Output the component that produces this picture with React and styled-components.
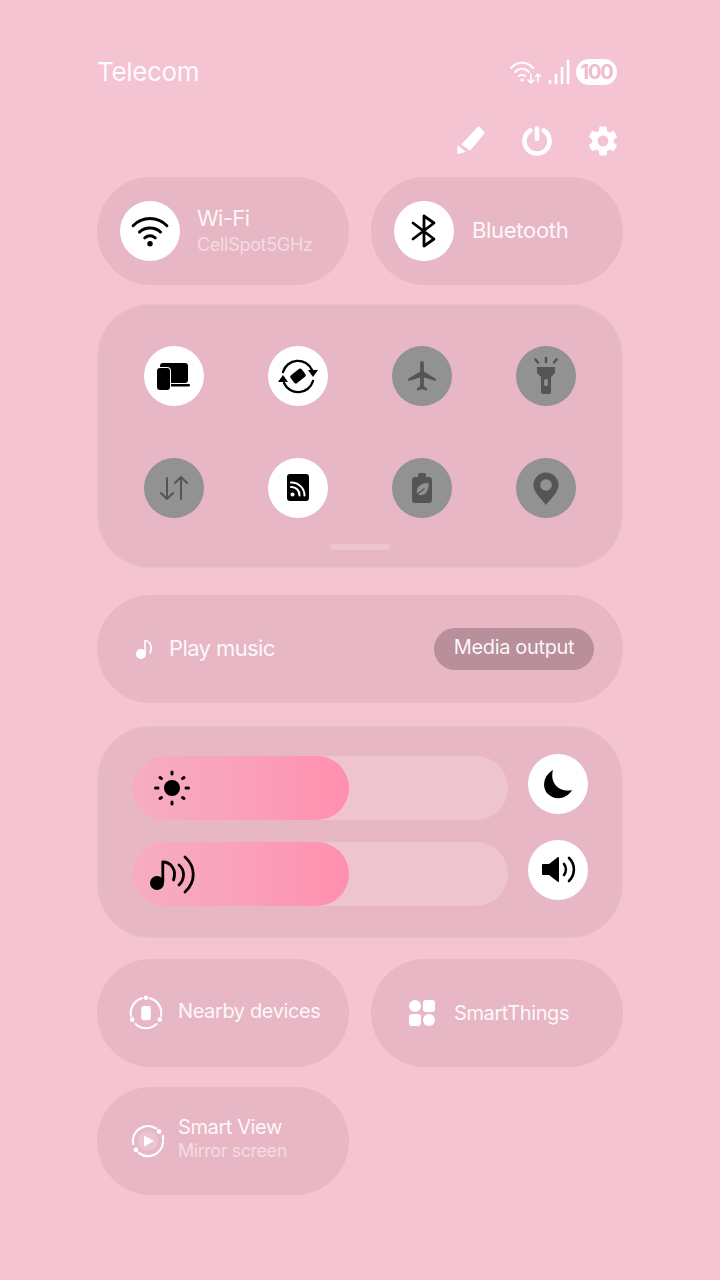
import React from 'react';
import styled, { createGlobalStyle } from 'styled-components';

const GlobalStyle = createGlobalStyle`
  html, body {
    margin: 0;
    padding: 0;
    background: #f5c4d3;
  }
  * {
    box-sizing: border-box;
  }
`;

const Page = styled.div`
  width: 720px;
  height: 1280px;
  padding: 54px 97px 0;
  background: #f5c4d3;
  color: #fff;
  font-family: Inter, "Noto Sans", sans-serif;
  overflow: hidden;
`;

const StatusBar = styled.div`
  display: flex;
  justify-content: space-between;
  align-items: center;
  height: 34px;
  padding-right: 6px;
`;

const Carrier = styled.div`
  font-size: 26px;
  letter-spacing: -0.35px;
  color: rgba(255, 255, 255, 0.95);
`;

const StatusIcons = styled.div`
  display: flex;
  align-items: center;
  gap: 5px;
  margin-top: 2px;
`;

const Battery = styled.div`
  width: 41px;
  height: 26px;
  border-radius: 13px;
  background: #fff;
  color: #f0bccb;
  font-size: 20px;
  font-weight: 700;
  letter-spacing: -1.2px;
  line-height: 26px;
  text-align: center;
`;

const Actions = styled.div`
  display: flex;
  justify-content: flex-end;
  gap: 36px;
  height: 34px;
  margin-top: 36px;
  padding-right: 5px;
  align-items: center;
`;

const TileRow = styled.div`
  display: grid;
  grid-template-columns: 252px 252px;
  column-gap: 22px;
  margin-top: ${({ $top }) => $top}px;
`;

const Tile = styled.div`
  display: flex;
  align-items: center;
  gap: ${({ $gap }) => $gap || 17}px;
  height: 108px;
  padding-left: ${({ $pad }) => $pad || 23}px;
  border-radius: 54px;
  background: #e8b7c5;
`;

const Circle = styled.div`
  display: flex;
  align-items: center;
  justify-content: center;
  flex: none;
  width: 60px;
  height: 60px;
  border-radius: 50%;
  background: ${({ $off }) => ($off ? '#929292' : '#fff')};
  color: ${({ $off }) => ($off ? '#555' : '#000')};
`;

const TileText = styled.div`
  display: flex;
  flex-direction: column;
  gap: ${({ $gap }) => $gap || 0}px;
  margin-top: ${({ $shift }) => $shift || 0}px;
`;

const TileTitle = styled.div`
  font-size: ${({ $size }) => $size || 22}px;
  line-height: 25px;
  letter-spacing: ${({ $spacing }) => $spacing || -0.3}px;
  color: rgba(255, 255, 255, 0.92);
`;

const TileSub = styled.div`
  font-size: 18px;
  line-height: 21px;
  letter-spacing: ${({ $spacing }) => $spacing || -0.3}px;
  color: rgba(255, 255, 255, 0.5);
`;

const QuickPanel = styled.div`
  width: 524px;
  height: 262px;
  margin: 20px 0 0 1px;
  padding: 41px 46px 0;
  border-radius: 52px;
  background: #e8b7c5;
  box-shadow: 0 0 0 1px #ecbdca;
`;

const QuickGrid = styled.div`
  display: grid;
  grid-template-columns: repeat(4, 60px);
  column-gap: 64px;
  row-gap: 52px;
`;

const PageHandle = styled.div`
  width: 60px;
  height: 6px;
  margin: 26px auto 0;
  border-radius: 3px;
  background: #eec4d0;
`;

const MusicTile = styled.div`
  display: flex;
  align-items: center;
  justify-content: space-between;
  height: 108px;
  margin-top: 28px;
  padding: 0 29px 0 38px;
  border-radius: 54px;
  background: #e8b7c5;
`;

const MusicLabel = styled.div`
  display: flex;
  align-items: center;
  gap: 16px;
`;

const MediaButton = styled.div`
  height: 42px;
  width: 160px;
  border-radius: 21px;
  background: #b98f9b;
  color: rgba(255, 255, 255, 0.95);
  font-size: 20px;
  line-height: 39px;
  letter-spacing: -0.35px;
  text-align: center;
`;

const SliderPanel = styled.div`
  display: flex;
  flex-direction: column;
  gap: 22px;
  width: 524px;
  height: 210px;
  margin: 24px 0 0 1px;
  padding: 29px 0 0 34px;
  border-radius: 52px;
  background: #e8b7c5;
  box-shadow: 0 0 0 1px #ecbdca;
`;

const SliderRow = styled.div`
  display: flex;
  align-items: flex-start;
  gap: 20px;
  height: 64px;
`;

const Track = styled.div`
  width: 376px;
  height: 64px;
  border-radius: 32px;
  background: #edc4d0;
`;

const Fill = styled.div`
  display: flex;
  align-items: center;
  height: 100%;
  padding-left: 18px;
  border-radius: 32px;
  background: linear-gradient(90deg, #f5adc2 0%, #fb9fba 55%, #ff8fae 100%);
  color: #000;
`;

const SliderButton = styled(Circle)`
  margin-top: -2px;
`;

const SvgIcon = styled.svg`
  display: block;
  flex: none;
`;

const Glyph = ({ children, size = 40, view = '-20 -20 40 40', height }) => (
  <SvgIcon width={size} height={height || size} viewBox={view} fill="currentColor">
    {children}
  </SvgIcon>
);

const line = { fill: 'none', stroke: 'currentColor', strokeLinecap: 'round', strokeLinejoin: 'round' };

const WifiIcon = () => (
  <Glyph view="0 0 36 32" size={38} height={34}>
    <g {...line} strokeWidth="2.8">
      <path d="M2 11C11 2 25 2 34 11" />
      <path d="M8 17C13.5 12 22.5 12 28 17" />
      <path d="M13 22.5C16 20.2 20 20.2 23 22.5" />
    </g>
    <circle cx="18" cy="28" r="2.6" />
  </Glyph>
);

const BluetoothIcon = () => (
  <Glyph view="-20 -20 40 40">
    <path {...line} strokeWidth="2.8" d="M-11 -8L10 8L0 15V-15L10 -8L-11 8" />
  </Glyph>
);

const DevicesIcon = () => (
  <Glyph>
    <rect x="-14" y="-13" width="28" height="20" rx="3" />
    <rect x="-4" y="8" width="20" height="2.4" rx="1" />
    <rect x="-18" y="-9" width="15" height="24" rx="4" fill="#fff" />
    <rect x="-17" y="-8" width="13" height="22" rx="3" />
  </Glyph>
);

const RotateIcon = () => (
  <Glyph>
    <g {...line} strokeWidth="2.4">
      <path d="M-15 -4A15.5 15.5 0 0 1 14 -6" />
      <path d="M15 5A15.5 15.5 0 0 1 -14 7" />
    </g>
    <polygon points="10,-6 20,-6 15,1" />
    <polygon points="-20,6 -10,6 -15,-1" />
    <rect x="-7" y="-5" width="14" height="10" rx="2" transform="rotate(-38)" />
  </Glyph>
);

const PlaneIcon = () => (
  <Glyph>
    <path
      transform="translate(-17.4 -17.4) scale(1.45)"
      d="M21.5 15.5v-1.6l-8.2-5V3.5c0-.9-.6-1.8-1.3-1.8s-1.3.9-1.3 1.8v5.4l-8.2 5v1.6l8.2-2.5V19l-2.2 1.6V22l3.5-.9 3.5.9v-1.4L13.3 19v-6z"
    />
  </Glyph>
);

const TorchIcon = () => (
  <Glyph>
    <path d="M-9 -9H9V-3L5 1V16Q5 18 3 18H-3Q-5 18 -5 16V1L-9 -3Z" />
    <rect x="-1.8" y="3" width="3.6" height="7" rx="1.5" fill="#929292" />
    <g {...line} strokeWidth="2.6">
      <path d="M-10.5 -16.5L-8 -13.5" />
      <path d="M0 -18V-14" />
      <path d="M10.5 -16.5L8 -13.5" />
    </g>
  </Glyph>
);

const DataIcon = () => (
  <Glyph>
    <g {...line} strokeWidth="2">
      <path d="M-7 -10V11M-13 5L-7 11L-1 5" />
      <path d="M7 11V-11M1 -5L7 -11L13 -5" />
    </g>
  </Glyph>
);

const RssCardIcon = () => (
  <Glyph>
    <rect x="-11" y="-14" width="22" height="27" rx="3" />
    <circle cx="-5.5" cy="6.5" r="2" fill="#fff" />
    <g {...line} stroke="#fff" strokeWidth="2">
      <path d="M-7 -1A8 8 0 0 1 1.5 7.5" />
      <path d="M-7 -5.5A13 13 0 0 1 6.5 7.5" />
    </g>
  </Glyph>
);

const BatteryLeafIcon = () => (
  <Glyph>
    <rect x="-4" y="-15" width="8" height="6" rx="1.5" />
    <rect x="-10" y="-11" width="20" height="26" rx="3" />
    <path d="M-5 5C-6 -2 0 -5 6.5 -5C7 3 3 8 -3 7Z" fill="#929292" />
    <path {...line} stroke="#555" strokeWidth="1.4" d="M-7 8L2 1" />
  </Glyph>
);

const PinIcon = () => (
  <Glyph>
    <path d="M0 17C-4 11 -12.5 5 -12.5 -3A12.5 12.5 0 0 1 12.5 -3C12.5 5 4 11 0 17Z" />
    <circle cx="0" cy="-3" r="5.8" fill="#929292" />
  </Glyph>
);

const MoonIcon = () => (
  <Glyph>
    <path d="M-5 -14C-14 -9 -17 3 -10 10C-3 17 9 15 14 6C4 9 -9 1 -5 -14Z" />
  </Glyph>
);

const SpeakerIcon = () => (
  <Glyph>
    <path d="M-16 -5Q-16 -6 -15 -6H-9L0 -13Q1 -13.5 1 -12V11Q1 12.5 0 12L-9 5H-15Q-16 5 -16 4Z" />
    <g {...line} strokeWidth="2.6">
      <path d="M6 -6A9 9 0 0 1 6 5" />
      <path d="M11 -12A16 16 0 0 1 11 11" />
    </g>
  </Glyph>
);

const SunIcon = () => (
  <Glyph size={44} height={40} view="-22 -20 44 40">
    <circle r="8" />
    <g {...line} strokeWidth="3">
      <path d="M0 -16V-14M0 14V16M-16.5 0H-14M14 0H16.5" />
      <path d="M-12 -10.5L-10.5 -9.5M12 -10.5L10.5 -9.5M-12 10.5L-10.5 9.5M12 10.5L10.5 9.5" />
    </g>
  </Glyph>
);

const MusicWaveIcon = () => (
  <Glyph size={46} height={40} view="0 0 46 40">
    <circle cx="7" cy="29" r="7" />
    <g {...line} strokeWidth="2.8">
      <path d="M12.8 28V8C21 8 27 16 23.5 26" />
      <path d="M29 11C35 16 35 25 29 31" />
      <path d="M35 3C46 13 46 28 35 38" />
    </g>
  </Glyph>
);

const SmallNoteIcon = () => (
  <Glyph size={18} height={20} view="0 0 18 20">
    <circle cx="6" cy="15" r="5" fill="#fff" />
    <path {...line} stroke="#fff" strokeWidth="1.6" d="M10 15V1.5C15 2 18 8 15 14" />
  </Glyph>
);

const PencilIcon = () => (
  <Glyph size={30} view="0 0 30 30">
    <path d="M21.3 1.2Q22.7 -.1 24 1.2L27.8 5.6Q29 7 27.8 8.3L14 24.7L5.4 18.5Z" />
    <path d="M1.3 19L10 26L1.3 28Z" />
  </Glyph>
);

const PowerIcon = () => (
  <Glyph size={30} view="0 0 30 30">
    <g {...line} strokeWidth="4.6">
      <path d="M8.2 4.5A12.5 12.5 0 1 0 21.8 4.5" />
      <path d="M15 2.5V13" />
    </g>
  </Glyph>
);

const GearIcon = () => (
  <Glyph size={30} view="2.5 2 19 20">
    <path d="M19.14 12.94c.04-.3.06-.61.06-.94 0-.32-.02-.64-.07-.94l2.03-1.58c.18-.14.23-.41.12-.61l-1.92-3.32c-.12-.22-.37-.29-.59-.22l-2.39.96c-.5-.38-1.03-.7-1.62-.94l-.36-2.54c-.04-.24-.24-.41-.48-.41h-3.84c-.24 0-.43.17-.47.41l-.36 2.54c-.59.24-1.13.57-1.62.94l-2.39-.96c-.22-.08-.47 0-.59.22L2.74 8.87c-.12.21-.08.47.12.61l2.03 1.58c-.05.3-.09.63-.09.94s.02.64.07.94l-2.03 1.58c-.18.14-.23.41-.12.61l1.92 3.32c.12.22.37.29.59.22l2.39-.96c.5.38 1.03.7 1.62.94l.36 2.54c.05.24.24.41.48.41h3.84c.24 0 .44-.17.47-.41l.36-2.54c.59-.24 1.13-.56 1.62-.94l2.39.96c.22.08.47 0 .59-.22l1.92-3.32c.12-.22.07-.47-.12-.61l-2.01-1.58zM12 15.6c-1.98 0-3.6-1.62-3.6-3.6s1.62-3.6 3.6-3.6 3.6 1.62 3.6 3.6-1.62 3.6-3.6 3.6z" />
  </Glyph>
);

const StatusWifi = () => (
  <Glyph size={33} height={26} view="0 0 33 26">
    <g {...line} stroke="#fff" strokeWidth="2">
      <path d="M2 9C8 2 18 2 24 9" />
      <path d="M6 13C10 8.5 16 8.5 20 13" />
      <path d="M10 17C11.5 15.5 14.5 15.5 16 17" />
      <path d="M22 15V24M19 21L22 24L25 21" strokeWidth="1.6" />
      <path d="M29 23V15M26.5 17.5L29 15L31.5 17.5" strokeWidth="1.6" />
    </g>
    <circle cx="13" cy="21" r="1.6" fill="#fff" />
  </Glyph>
);

const StatusSignal = () => (
  <Glyph size={24} height={26} view="0 0 24 26">
    <g {...line} stroke="#fff" strokeWidth="2.6">
      <path d="M3 22V24" />
      <path d="M9 16V24" />
      <path d="M15 9V24" />
      <path d="M21 2V24" />
    </g>
  </Glyph>
);

const NearbyIcon = () => (
  <Glyph size={38} view="-20 -20 40 40">
    <rect x="-5" y="-7.5" width="10" height="15" rx="2.5" fill="#fff" />
    <g {...line} stroke="#fff" strokeWidth="2.2">
      <path d="M-4 -15.5A16 16 0 0 0 -15.8 3" />
      <path d="M4 -15.5A16 16 0 0 1 15.8 3" />
      <path d="M11 11.6A16 16 0 0 1 -11 11.6" />
    </g>
    <g fill="#fff">
      <circle cx="0" cy="-16" r="2.4" />
      <circle cx="14.5" cy="7" r="2.4" />
      <circle cx="-14.5" cy="7" r="2.4" />
    </g>
  </Glyph>
);

const ThingsIcon = () => (
  <Glyph size={26} view="0 0 26 26">
    <g fill="#fff">
      <circle cx="6" cy="6" r="6" />
      <rect x="14" y="0" width="12" height="12" rx="3" />
      <rect x="0" y="14" width="12" height="12" rx="3" />
      <circle cx="20" cy="20" r="6" />
    </g>
  </Glyph>
);

const SmartViewIcon = () => (
  <Glyph size={36} view="-18 -18 36 36">
    <circle r="10" fill="#fff" opacity="0.18" />
    <polygon points="-4,-5.5 6,0 -4,5.5" fill="#fff" />
    <g {...line} stroke="#fff" strokeWidth="2.2">
      <path d="M8 -12.5A15 15 0 0 0 -14.8 3" />
      <path d="M-9 12A15 15 0 0 0 15 1" />
      <path d="M15 -1V-5" />
    </g>
    <g fill="#fff">
      <circle cx="11" cy="-9.5" r="2.4" />
      <circle cx="-12" cy="9" r="2.4" />
    </g>
  </Glyph>
);

const quickToggles = [
  { id: 'devices', icon: <DevicesIcon /> },
  { id: 'rotate', icon: <RotateIcon /> },
  { id: 'plane', icon: <PlaneIcon />, off: true },
  { id: 'torch', icon: <TorchIcon />, off: true },
  { id: 'data', icon: <DataIcon />, off: true },
  { id: 'rss', icon: <RssCardIcon /> },
  { id: 'battery', icon: <BatteryLeafIcon />, off: true },
  { id: 'pin', icon: <PinIcon />, off: true },
];

const sliders = [
  { id: 'brightness', icon: <SunIcon />, button: <MoonIcon />, level: 217 },
  { id: 'volume', icon: <MusicWaveIcon />, button: <SpeakerIcon />, level: 217 },
];

const App = () => (
  <Page>
    <GlobalStyle />
    <StatusBar>
      <Carrier>Telecom</Carrier>
      <StatusIcons>
        <StatusWifi />
        <StatusSignal />
        <Battery>100</Battery>
      </StatusIcons>
    </StatusBar>

    <Actions>
      <PencilIcon />
      <PowerIcon />
      <GearIcon />
    </Actions>

    <TileRow $top={19}>
      <Tile>
        <Circle><WifiIcon /></Circle>
        <TileText $gap={3} $shift={-2}>
          <TileTitle $spacing={-0.6}>Wi-Fi</TileTitle>
          <TileSub>CellSpot5GHz</TileSub>
        </TileText>
      </Tile>
      <Tile $gap={18}>
        <Circle><BluetoothIcon /></Circle>
        <TileText $shift={-2}>
          <TileTitle>Bluetooth</TileTitle>
        </TileText>
      </Tile>
    </TileRow>

    <QuickPanel>
      <QuickGrid>
        {quickToggles.map((toggle) => (
          <Circle key={toggle.id} $off={toggle.off}>{toggle.icon}</Circle>
        ))}
      </QuickGrid>
      <PageHandle />
    </QuickPanel>

    <MusicTile>
      <MusicLabel>
        <SmallNoteIcon />
        <TileText $shift={-2}>
          <TileTitle $spacing={-0.6}>Play music</TileTitle>
        </TileText>
      </MusicLabel>
      <MediaButton>Media output</MediaButton>
    </MusicTile>

    <SliderPanel>
      {sliders.map((slider) => (
        <SliderRow key={slider.id}>
          <Track>
            <Fill style={{ width: slider.level }}>{slider.icon}</Fill>
          </Track>
          <SliderButton>{slider.button}</SliderButton>
        </SliderRow>
      ))}
    </SliderPanel>

    <TileRow $top={22}>
      <Tile $pad={30} $gap={13}>
        <NearbyIcon />
        <TileText $shift={-4}>
          <TileTitle $size={20} $spacing={-0.4}>Nearby devices</TileTitle>
        </TileText>
      </Tile>
      <Tile $pad={38} $gap={19}>
        <ThingsIcon />
        <TileTitle $size={20} $spacing={-0.4}>SmartThings</TileTitle>
      </Tile>
    </TileRow>

    <TileRow $top={20}>
      <Tile $pad={33} $gap={12}>
        <SmartViewIcon />
        <TileText $shift={-6}>
          <TileTitle $size={20} $spacing={-0.4}>Smart View</TileTitle>
          <TileSub $spacing={-0.45}>Mirror screen</TileSub>
        </TileText>
      </Tile>
    </TileRow>
  </Page>
);

export default App;
